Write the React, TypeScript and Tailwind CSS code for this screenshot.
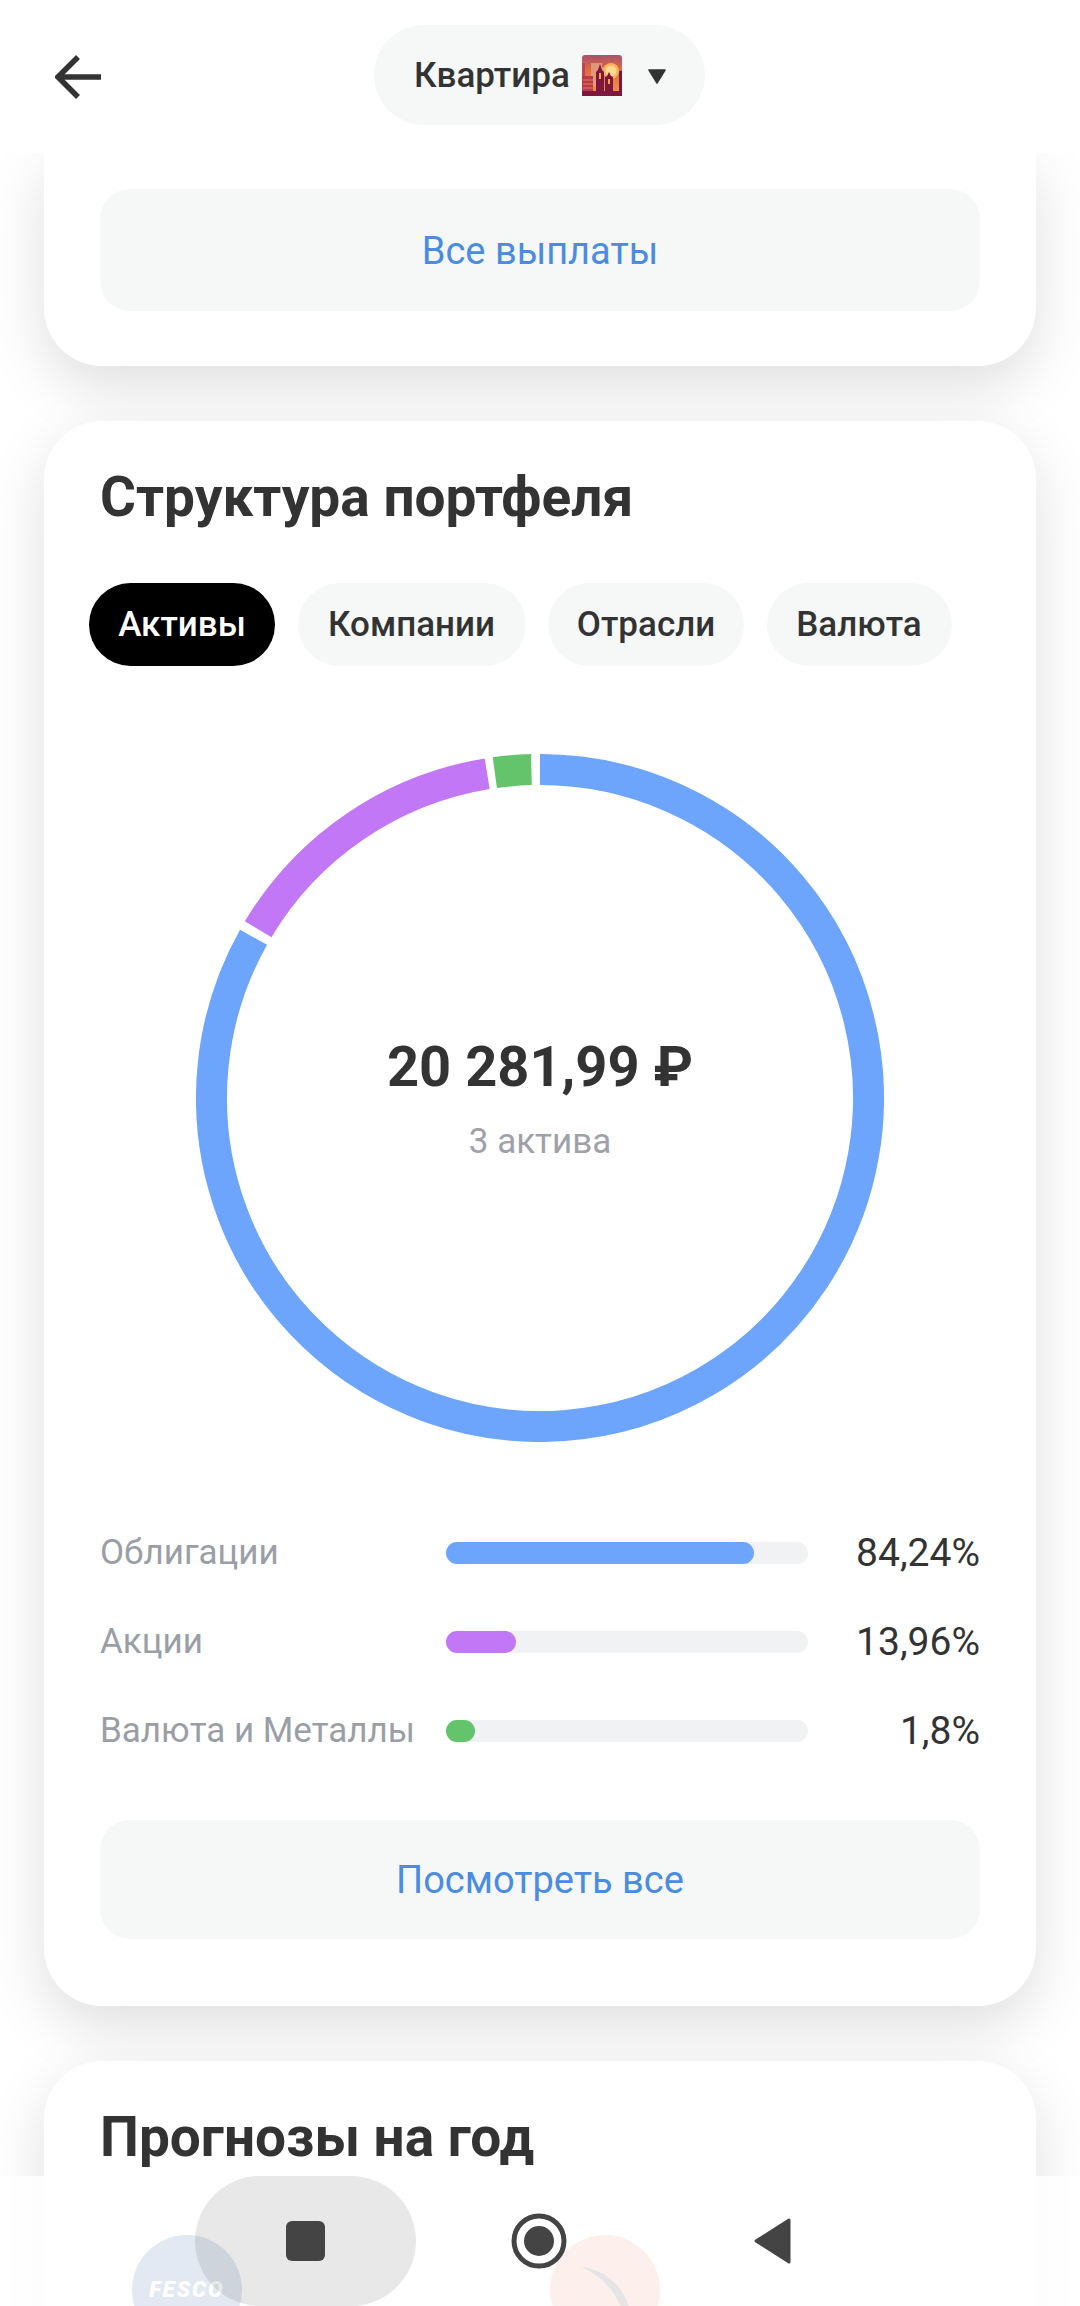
import React from "react";

const CX = 344;
const CY = 344;
const R = 328.5;
function arc(a0: number, a1: number) {
  const p = (a: number) => {
    const t = (a * Math.PI) / 180;
    return `${(CX + R * Math.sin(t)).toFixed(2)} ${(CY - R * Math.cos(t)).toFixed(2)}`;
  };
  const large = a1 - a0 > 180 ? 1 : 0;
  return `M ${p(a0)} A ${R} ${R} 0 ${large} 1 ${p(a1)}`;
}

const rows = [
  { label: "Облигации", value: "84,24%", w: 308, color: "bg-[#6ca5fb]" },
  { label: "Акции", value: "13,96%", w: 70, color: "bg-[#c278f6]" },
  { label: "Валюта и Металлы", value: "1,8%", w: 29, color: "bg-[#63c46b]" },
];

const tabs = ["Компании", "Отрасли", "Валюта"];

function SunsetIcon() {
  return (
    <svg width="40" height="41" viewBox="0 0 40 41" className="shrink-0">
      <defs>
        <linearGradient id="sky" x1="0" y1="0" x2="0" y2="1">
          <stop offset="0" stopColor="#a8506e" />
          <stop offset="0.35" stopColor="#e0693f" />
          <stop offset="1" stopColor="#f29a3c" />
        </linearGradient>
      </defs>
      <rect width="40" height="41" rx="3" fill="url(#sky)" />
      <circle cx="29" cy="16" r="8" fill="#f7b25e" />
      <circle cx="29" cy="16" r="5.5" fill="#ffd98c" />
      <path d="M9 8h11v4h2v20H9z" fill="#e3a184" opacity="0.8" />
      <path d="M0 8h3v14H0z" fill="#c0455a" />
      <path d="M0 21h11v20H0z" fill="#b93a4a" />
      <path d="M1 25h10M1 29h10M1 33h10" stroke="#e77a50" strokeWidth="1.2" />
      <path d="M14 41V17l2-2 2-6 2 6 2 2v24z" fill="#7d1740" />
      <path d="M23 41V22l2-1 2-4 2 4 2 1v19z" fill="#7d1740" />
      <path d="M37 16h3v25h-3z" fill="#7d1740" />
      <rect x="17" y="18" width="2" height="6" fill="#f4a248" />
      <rect x="26" y="24" width="2" height="5" fill="#f4a248" />
      <rect y="36" width="40" height="5" fill="#7d1740" />
    </svg>
  );
}

export default function App() {
  return (
    <div
      className="relative h-[2306px] w-[1080px] overflow-hidden bg-white text-[#333333]"
      style={{ fontFamily: "Roboto, 'Noto Sans', sans-serif" }}
    >
      <header className="relative z-10 flex h-[153px] items-start bg-white">
        <svg width="46" height="44" viewBox="0 0 46 44" className="ml-[55px] mt-[55px] shrink-0" fill="none" stroke="#333333" strokeWidth="5.5">
          <path d="M46 22H3" />
          <path d="M23 2 3 22l20 20" />
        </svg>
        <div className="ml-[273px] mt-[25px] flex h-[100px] w-[331px] items-center rounded-full bg-[#f6f8f8] pl-[40px]">
          <span className="text-[35px] font-medium leading-none">Квартира</span>
          <span className="ml-[12px] flex">
            <SunsetIcon />
          </span>
          <svg width="18" height="15" viewBox="0 0 18 15" className="ml-[26px] mt-[2px]">
            <path d="M1 1h16L9 14z" fill="#333333" stroke="#333333" strokeWidth="1.5" strokeLinejoin="round" />
          </svg>
        </div>
      </header>

      <main className="flex flex-col gap-[55px] px-[44px]">
        <section className="rounded-b-[58px] bg-white px-[56px] pb-[55px] pt-[36px] shadow-[0_20px_60px_rgba(0,0,0,0.13)]">
          <button className="flex h-[122px] w-full items-center justify-center rounded-[30px] bg-[#f6f8f8] pt-[2px] text-[38px] text-[#4a8ce2]">
            Все выплаты
          </button>
        </section>

        <section className="rounded-[58px] bg-white px-[56px] pb-[67px] pt-[48px] shadow-[0_20px_60px_rgba(0,0,0,0.13)]">
          <h2 className="text-[55px] font-bold leading-[56px]">Структура портфеля</h2>

          <div className="-ml-[11px] mt-[58px] flex h-[83px] gap-[22.5px] text-[35px] font-medium">
            <div className="flex w-[186px] items-center justify-center rounded-full bg-black pt-[2px] text-white">Активы</div>
            {tabs.map((t, i) => (
              <div
                key={t}
                className={
                  i === 0
                    ? "flex w-[228px] items-center justify-center rounded-full bg-[#f6f8f8] pt-[2px]"
                    : i === 1
                      ? "flex w-[196px] items-center justify-center rounded-full bg-[#f6f8f8] pt-[2px]"
                      : "flex w-[185px] items-center justify-center rounded-full bg-[#f6f8f8] pt-[2px]"
                }
              >
                {t}
              </div>
            ))}
          </div>

          <div className="relative mx-auto mt-[88px] h-[688px] w-[688px]">
            <svg width="688" height="688" viewBox="0 0 688 688" fill="none" strokeWidth="31">
              <path d={arc(0, 299.3)} stroke="#6ca5fb" />
              <path d={arc(300.9, 350.75)} stroke="#c278f6" />
              <path d={arc(352.1, 358.5)} stroke="#63c46b" />
            </svg>
            <div className="absolute inset-x-0 top-[283px] flex flex-col items-center">
              <div className="text-[56px] font-bold leading-[60px]">20 281,99 ₽</div>
              <div className="mt-[24px] text-[35px] leading-[42px] text-[#9ea2a8]">3 актива</div>
            </div>
          </div>

          <div className="mt-[90px] flex flex-col gap-[47px]">
            {rows.map((r) => (
              <div key={r.label} className="flex h-[42px] items-center">
                <div className="w-[346px] shrink-0 text-[35px] leading-[42px] text-[#9a9ea6]">{r.label}</div>
                <div className="h-[22px] w-[362px] shrink-0 rounded-full bg-[#f0f2f3]">
                  <div className={`h-[22px] rounded-full ${r.color}`} style={{ width: r.w }} />
                </div>
                <div className="flex-1 text-right text-[39px] leading-[42px]">{r.value}</div>
              </div>
            ))}
          </div>

          <button className="mt-[68px] flex h-[119px] w-full items-center justify-center rounded-[30px] bg-[#f6f8f8] pt-[2px] text-[38px] text-[#4a8ce2]">
            Посмотреть все
          </button>
        </section>

        <section className="rounded-t-[58px] bg-white px-[56px] pt-[48px] shadow-[0_20px_60px_rgba(0,0,0,0.13)]">
          <h2 className="text-[55px] font-bold leading-[56px]">Прогнозы на год</h2>
          <div className="mt-[70px] flex">
            <div className="ml-[32px] flex h-[110px] w-[110px] items-start justify-center rounded-full bg-[#3e69a8] pt-[43px] text-[22px] font-black italic leading-[24px] tracking-[2px] text-white">
              FESCO
            </div>
            <div className="relative ml-[308px] h-[110px] w-[110px] overflow-hidden rounded-full bg-[#f09b81]">
              <svg width="110" height="110" viewBox="0 0 110 110">
                <path d="M30 32C55 34 72 50 79 72L71 72C62 52 48 38 30 32Z" fill="#525252" />
              </svg>
            </div>
          </div>
        </section>
      </main>

      <nav className="absolute inset-x-0 bottom-0 z-10 flex h-[130px] items-center bg-white/85">
        <div className="ml-[195px] flex h-[130px] w-[221px] items-center justify-center rounded-full bg-black/[0.09]">
          <div className="h-[40px] w-[39px] rounded-[6px] bg-[#444444]" />
        </div>
        <svg width="56" height="56" viewBox="0 0 56 56" className="ml-[95px]">
          <circle cx="28" cy="28" r="25" fill="none" stroke="#444444" strokeWidth="5" />
          <circle cx="28" cy="28" r="15" fill="#444444" />
        </svg>
        <svg width="38" height="48" viewBox="0 0 38 48" className="ml-[186px]">
          <path d="M36 3v42L3 24z" fill="#444444" stroke="#444444" strokeWidth="3" strokeLinejoin="round" />
        </svg>
      </nav>
    </div>
  );
}
